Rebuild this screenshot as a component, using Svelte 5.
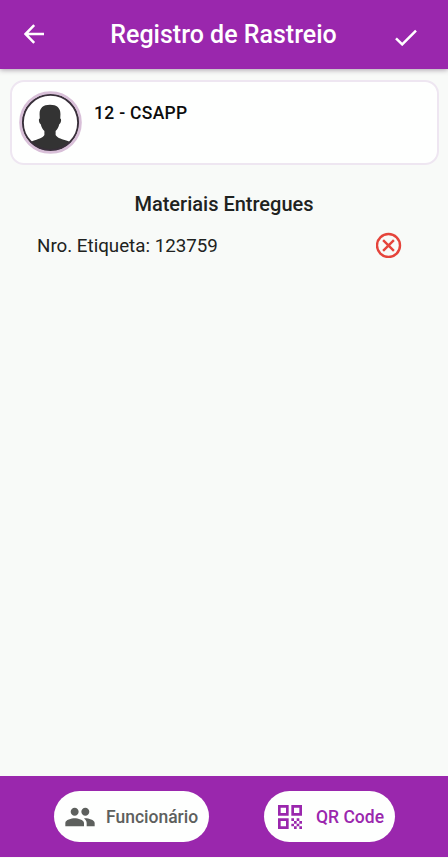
<script>
	let employee = { id: 12, name: 'CSAPP' };

	let materials = [{ tag: '123759' }];

	function removeMaterial(tag) {
		materials = materials.filter((m) => m.tag !== tag);
	}
</script>

<div class="screen">
	<header>
		<button class="icon back" aria-label="Voltar">
			<svg viewBox="0 0 20 20" width="20" height="20">
				<path d="M20 10H1.6M10.200 1.200L1.500 10l8.700 8.800" />
			</svg>
		</button>
		<h1>Registro de Rastreio</h1>
		<button class="icon check" aria-label="Confirmar">
			<svg viewBox="0 0 22 17" width="22" height="17">
				<path d="M1 9.4l6.2 6L21 1.6" />
			</svg>
		</button>
	</header>

	<main>
		<section class="card">
			<svg class="avatar" viewBox="0 0 64 64" width="63" height="63">
				<clipPath id="face"><circle cx="32" cy="32" r="29" /></clipPath>
				<circle cx="32" cy="32" r="29" fill="#fff" />
				<g clip-path="url(#face)" fill="#333">
					<path
						d="M31.5 14c7 0 10.700 3.300 10.600 9.600l-.2 4.300c1.500.2 1 4.600-1 5.800-.8 3.200-2 5.200-3.700 6.900v4.200c1.600 3.200 7.500 4.600 11.600 5.700 4 1.100 6 3 7.200 5.400v8H7v-8c1.500-2.600 4-4.400 7.500-5.400 4.200-1.200 9.800-2.700 11.300-5.700v-4.200c-1.700-1.700-2.900-3.700-3.700-6.900-2-1.200-2.500-5.600-1-5.800l-.2-4.300C20.800 17.300 24.500 14 31.500 14z"
					/>
				</g>
				<circle cx="32" cy="32" r="28.200" fill="none" stroke="#382f3a" stroke-width="2.200" />
				<circle cx="32" cy="32" r="30.400" fill="none" stroke="#d8bfd8" stroke-width="2.800" />
			</svg>
			<span class="name">{employee.id} - {employee.name}</span>
		</section>

		<h2>Materiais Entregues</h2>

		{#each materials as material (material.tag)}
			<div class="row">
				<span>Nro. Etiqueta: {material.tag}</span>
				<button class="icon" aria-label="Remover" on:click={() => removeMaterial(material.tag)}>
					<svg viewBox="0 0 26 26" width="26" height="26">
						<g fill="none" stroke="#e5443b" stroke-width="2.400">
							<circle cx="12.500" cy="13.500" r="11.500" />
							<path d="M7.100 8.100l10.800 10.800M17.900 8.100L7.100 18.900" />
						</g>
					</svg>
				</button>
			</div>
		{/each}
	</main>

	<footer>
		<button class="pill people">
			<svg viewBox="0 0 24 24" width="32" height="32">
				<path
					d="M16 11c1.660 0 2.990-1.340 2.990-3S17.660 5 16 5s-3 1.340-3 3 1.340 3 3 3zm-8 0c1.660 0 2.990-1.340 2.990-3S9.660 5 8 5 5 6.340 5 8s1.340 3 3 3zm0 2c-2.330 0-7 1.170-7 3.500V19h14v-2.500c0-2.330-4.670-3.500-7-3.500zm8 0c-.29 0-.62.020-.97.050 1.160.84 1.970 1.970 1.970 3.450V19h6v-2.500c0-2.330-4.670-3.500-7-3.500z"
				/>
			</svg>
			<span>Funcionário</span>
		</button>
		<button class="pill qr">
			<svg viewBox="0 0 24 24" width="32" height="32">
				<path
					d="M3 11h8V3H3v8zm2-6h4v4H5V5zM3 21h8v-8H3v8zm2-6h4v4H5v-4zM13 3v8h8V3h-8zm6 6h-4V5h4v4zM19 19h2v2h-2zM13 13h2v2h-2zM15 15h2v2h-2zM13 17h2v2h-2zM15 19h2v2h-2zM17 17h2v2h-2zM17 13h2v2h-2zM19 15h2v2h-2z"
				/>
			</svg>
			<span>QR Code</span>
		</button>
	</footer>
</div>

<style>
	:global(body) {
		background: #f8faf8;
	}

	.screen {
		display: flex;
		flex-direction: column;
		height: 858px;
		box-sizing: border-box;
		padding-bottom: 1px;
		background: #f8faf8;
		font-family: Roboto, 'Liberation Sans', sans-serif;
		color: #202220;
	}

	button {
		border: 0;
		padding: 0;
		font: inherit;
		cursor: pointer;
	}

	svg {
		display: block;
		flex: none;
	}

	.icon {
		background: none;
	}

	header {
		display: flex;
		align-items: center;
		justify-content: space-between;
		height: 69px;
		box-sizing: border-box;
		padding: 0 31px 1px 24px;
		background: #9a27ad;
		color: #fff;
		box-shadow: 0 1px 5px rgba(70, 50, 75, 0.45);
	}

	header path {
		fill: none;
		stroke: #fff;
		stroke-width: 2.5;
	}

	.check {
		padding-top: 7px;
	}

	h1 {
		margin: 2px 0 0 8px;
		font-size: 25px;
		font-weight: 500;
		line-height: 30px;
	}

	main {
		flex: 1;
	}

	.card {
		display: flex;
		height: 85px;
		box-sizing: border-box;
		margin: 11px 9px 0 10px;
		padding: 9px 7px;
		border: 2px solid #eee6f1;
		border-radius: 14px;
		background: #fefffe;
	}

	.name {
		margin: 11px 0 0 12px;
		font-size: 17.500px;
		font-weight: 500;
		line-height: 22px;
		letter-spacing: 0.3px;
		color: #0c0c0c;
	}

	h2 {
		margin: 26px 0 0;
		font-size: 20px;
		font-weight: 500;
		line-height: 26px;
		text-align: center;
	}

	.row {
		display: flex;
		align-items: center;
		justify-content: space-between;
		height: 26px;
		margin-top: 15px;
		padding: 0 46px 0 37px;
		font-size: 18.750px;
	}

	.row span {
		padding-top: 2px;
	}

	footer {
		display: flex;
		align-items: center;
		height: 81px;
		padding-left: 54px;
		gap: 55px;
		background: #9a27ad;
	}

	.pill {
		display: flex;
		align-items: center;
		height: 51px;
		border-radius: 26px;
		background: #fefffe;
		font-size: 17.500px;
		font-weight: 500;
	}

	.people {
		width: 155px;
		padding-left: 10px;
		gap: 10px;
		color: #5d605d;
	}

	.qr {
		width: 131px;
		padding-left: 10px;
		gap: 10px;
		color: #9a27ad;
	}

	.pill svg {
		fill: currentColor;
	}
</style>
